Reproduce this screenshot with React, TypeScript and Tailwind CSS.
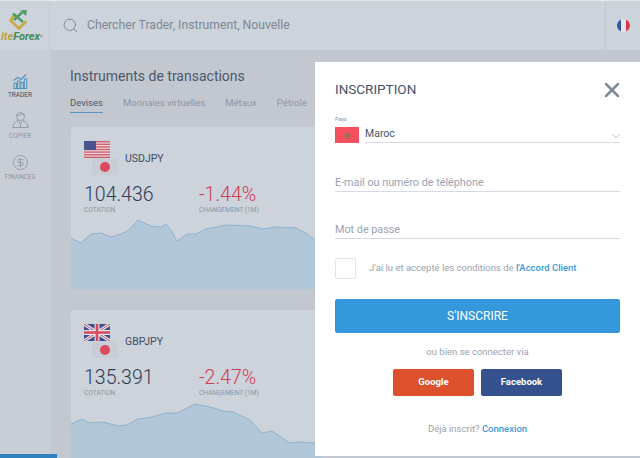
import React from 'react'
import { Search, X, ChevronDown, CircleDollarSign } from 'lucide-react'

const UsFlag = () => (
  <svg width="26" height="17" viewBox="0 0 26 17">
    <rect width="26" height="17" fill="#e8d5da" />
    {[0, 2.6, 5.2, 7.8, 10.4, 13, 15.6].map((y) => (
      <rect key={y} y={y} width="26" height="1.4" fill="#d0606f" />
    ))}
    <rect width="12" height="9" fill="#4a5590" />
  </svg>
)

const UkFlag = () => (
  <svg width="26" height="17" viewBox="0 0 26 17">
    <rect width="26" height="17" fill="#3c4c8c" />
    <path d="M0 0L26 17M26 0L0 17" stroke="#dfe2e8" strokeWidth="3.4" />
    <path d="M0 0L26 17M26 0L0 17" stroke="#d0505f" strokeWidth="1" />
    <path d="M13 0V17M0 8.5H26" stroke="#dfe2e8" strokeWidth="5" />
    <path d="M13 0V17M0 8.5H26" stroke="#d8475a" strokeWidth="2.6" />
  </svg>
)

const JpFlag = () => (
  <div className="flex h-[17px] w-[26px] items-center justify-center bg-[#c8ccd4]">
    <div className="h-[10px] w-[10px] rounded-full bg-[#dd4a5e]" />
  </div>
)

const TraderIcon = () => (
  <svg width="16" height="16" viewBox="0 0 16 16" fill="none" stroke="#4f93bf" strokeWidth="1">
    <path d="M1.5 15.5H14.5" />
    <rect x="2" y="10" width="2.4" height="5.5" />
    <rect x="5.6" y="8" width="2.4" height="7.5" />
    <rect x="9" y="9.5" width="2.4" height="6" />
    <rect x="12.3" y="6" width="2.4" height="9.5" />
    <path d="M1.5 7.5L6 4.5L9 6.5L14 1.5" strokeWidth="1.2" />
  </svg>
)

const CopyIcon = () => (
  <svg width="17" height="18" viewBox="0 0 17 18" fill="none" stroke="#8d959f" strokeWidth="0.9">
    <circle cx="8.5" cy="5.5" r="4" />
    <path d="M4.7 4.5C6.5 4.5 9 4 10 2.5C10.5 3.5 11.5 4 12.3 4.5" />
    <path d="M6 9.5C3.5 10.5 1 12.5 0.8 16.5H16.2C16 12.5 13.5 10.5 11 9.5L8.5 13Z" />
    <path d="M8.5 13V16.5" />
  </svg>
)

const Logo = () => (
  <svg width="20" height="20" viewBox="0 0 20 20" fill="none">
    <path d="M5 5.5L1.5 10.5L10 18.5L17.5 11" stroke="#c7a93f" strokeWidth="2.6" />
    <path d="M4 3.5L14 12M5 10L13 2.5" stroke="#4f9a63" strokeWidth="2.4" />
    <path d="M11 0.5L18 0L17 6Z" fill="#4f9a63" />
  </svg>
)

const Chart = ({ points, height }: { points: string; height: number }) => (
  <svg className="mt-[5px] block" width="250" height={height} viewBox={`0 0 250 ${height}`}>
    <polygon points={`0,${height} ${points} 250,${height}`} fill="#b1c6d7" />
    <polyline points={points} fill="none" stroke="#8fb2cd" strokeWidth="1" />
  </svg>
)

const Card = ({
  name,
  flag,
  price,
  change,
  points,
  height,
}: {
  name: string
  flag: React.ReactNode
  price: string
  change: string
  points: string
  height: number
}) => (
  <div className="w-[250px] shrink-0 overflow-hidden rounded-t-[3px] bg-[#cdd3da]">
    <div className="flex pl-[13px] pt-[14px]">
      <div className="flex w-[41px] flex-col">
        {flag}
        <div className="ml-[8px]">
          <JpFlag />
        </div>
      </div>
      <div className="pt-[11px] text-[10.5px] leading-[14px] text-[#3f4c63]">{name}</div>
    </div>
    <div className="mt-[8px] flex pl-[13px]">
      <div className="w-[115px]">
        <div className="text-[19.5px] font-light leading-[24px] text-[#2f3d58]">{price}</div>
        <div className="-mt-[1px] text-[6.6px] leading-[9px] text-[#8b94a3]">COTATION</div>
      </div>
      <div>
        <div className="text-[19.5px] font-light leading-[24px] text-[#d23c54]">{change}</div>
        <div className="-mt-[1px] text-[6.6px] leading-[9px] text-[#8b94a3]">CHANGEMENT (1M)</div>
      </div>
    </div>
    <Chart points={points} height={height} />
  </div>
)

const Field = ({ label, top }: { label: string; top: string }) => (
  <div className={`${top} border-b border-[#d5dbe4] pb-[1px] text-[10.8px] leading-[14px] text-[#9aa2af]`}>{label}</div>
)

export default function App() {
  return (
    <div className="relative flex h-[458px] w-[640px] flex-col overflow-hidden bg-[#c3c8d0] font-['Roboto',sans-serif]">
      <div className="h-[1px] shrink-0 bg-[#e8eaed]" />
      <div className="flex h-[49px] shrink-0 bg-[#cdd3da]">
        <div className="flex w-[50px] shrink-0 flex-col overflow-hidden border-r border-[#c5cad2] pt-[9px]">
          <div className="ml-[9px]">
            <Logo />
          </div>
          <div className="ml-[1px] mt-[2px] whitespace-nowrap text-[11px] font-bold italic leading-[10px]">
            <span className="text-[#b9a33f]">ite</span>
            <span className="text-[#3f8a57]">Forex</span>
            <span className="align-top text-[5px] text-[#b5485a]">*</span>
          </div>
        </div>
        <div className="flex flex-1 items-center pl-[12px] text-[12.2px] text-[#7e8896]">
          <Search size={17} strokeWidth={1.4} className="mr-[8px] text-[#7e8896]" />
          Chercher Trader, Instrument, Nouvelle
        </div>
        <div className="flex w-[35px] items-center justify-center border-l border-[#c5cad2]">
          <div className="-mr-[1px] flex h-[13px] w-[13px] overflow-hidden rounded-full">
            <div className="flex-1 bg-[#2a5aa5]" />
            <div className="flex-1 bg-[#e2e6ea]" />
            <div className="flex-1 bg-[#d83a4a]" />
          </div>
        </div>
      </div>

      <div className="flex flex-1">
        <div className="flex w-[50px] shrink-0 flex-col items-center bg-[#c9ced6] pr-[10px] pt-[23px]">
          <TraderIcon />
          <div className="mt-[2px] text-[6.5px] leading-[9px] text-[#3f4c63]">TRADER</div>
          <div className="mt-[11px]">
            <CopyIcon />
          </div>
          <div className="mt-[3px] text-[6.5px] leading-[9px] text-[#8d959f]">COPIER</div>
          <CircleDollarSign size={17} strokeWidth={0.9} className="mt-[13px] text-[#7e8896]" />
          <div className="mt-[2px] text-[6.5px] leading-[9px] text-[#8d959f]">FINANCES</div>
        </div>

        <div className="flex-1 pl-[20px] pt-[18px]">
          <div className="text-[14px] leading-[17px] text-[#4b586c]">Instruments de transactions</div>
          <div className="mt-[12px] flex gap-[20px] text-[9.5px] leading-[12px] text-[#8d96a4]">
            <div className="border-b border-[#5b96c2] pb-[3px] text-[#4b586c]">Devises</div>
            <div>Monnaies virtuelles</div>
            <div>Métaux</div>
            <div>Pétrole</div>
          </div>
          <div className="mt-[14px] flex flex-col gap-[21px] pl-[1px]">
            <Card
              name="USDJPY"
              flag={<UsFlag />}
              price="104.436"
              change="-1.44%"
              height={69}
              points="0,18 10,23 20,14 30,13 40,17 50,14 58,10 67,0 80,6 90,7 95,4 100,10 106,21 116,14 125,14 135,9 155,5 180,6 192,9 205,7 225,8 235,13 244,20 250,24"
            />
            <Card
              name="GBPJPY"
              flag={<UkFlag />}
              price="135.391"
              change="-2.47%"
              height={80}
              points="0,21 11,16 19,20 32,19 47,23 56,22 66,16 76,15 96,10 106,10 124,1 139,4 152,8 162,9 179,17 191,30 201,28 219,40 229,39 244,40 250,40"
            />
          </div>
        </div>
      </div>

      <div className="absolute bottom-0 left-0 h-[4px] w-[57px] bg-[#2f80bd]" />

      <div className="absolute left-[315px] top-[62px] h-[394px] w-[325px] bg-white px-[20px] pt-[19px]">
        <div className="flex items-center justify-between">
          <div className="text-[13.5px] leading-[17px] text-[#47536a]">INSCRIPTION</div>
          <X size={24} strokeWidth={2.5} className="-my-[4px] -mr-[4px] text-[#7f8a9a]" />
        </div>
        <div className="mt-[17px] text-[5.5px] leading-[8px] text-[#8b94a3]">Pays</div>
        <div className="mt-[4px] flex items-end">
          <div className="flex h-[16px] w-[24px] shrink-0 items-center justify-center bg-[#f4505f]">
            <svg width="9" height="9" viewBox="0 0 10 10">
              <path d="M5 0L6.2 3.6H10L7 5.9L8.1 9.5L5 7.3L1.9 9.5L3 5.9L0 3.6H3.8Z" fill="#93784f" />
            </svg>
          </div>
          <div className="ml-[6px] flex flex-1 items-center justify-between border-b border-[#d5dbe4] pb-[1px] text-[10.5px] leading-[14px] text-[#47536a]">
            Maroc
            <ChevronDown size={14} strokeWidth={1} className="-my-[2px] -mr-[3px] mt-[1px] text-[#7f8a9a]" />
          </div>
        </div>
        <Field top="mt-[33px]" label="E-mail ou numéro de téléphone" />
        <Field top="mt-[31px]" label="Mot de passe" />

        <div className="mt-[19px] flex items-center">
          <div className="h-[21px] w-[21px] rounded-[2px] border border-[#e0e4ea]" />
          <div className="ml-[13px] text-[9.5px] text-[#9aa2af]">
            J'ai lu et accepté les conditions de <span className="font-medium text-[#3a9ad9]">l'Accord Client</span>
          </div>
        </div>

        <div className="mt-[20px] flex h-[34px] items-center justify-center rounded-[2px] bg-[#3498db] text-[12px] text-white">
          S'INSCRIRE
        </div>
        <div className="mt-[13px] text-center text-[9.5px] leading-[12px] text-[#9aa2af]">ou bien se connecter via</div>
        <div className="mt-[11px] flex justify-center gap-[7px] text-[9.5px] font-bold text-white">
          <div className="flex h-[27px] w-[81px] items-center justify-center rounded-[2px] bg-[#dc512c]">Google</div>
          <div className="flex h-[27px] w-[81px] items-center justify-center rounded-[2px] bg-[#35528f]">Facebook</div>
        </div>
        <div className="mt-[27px] text-center text-[9.5px] leading-[12px] text-[#9aa2af]">
          Déjà inscrit? <span className="font-medium text-[#3a9ad9]">Connexion</span>
        </div>
      </div>
    </div>
  )
}
